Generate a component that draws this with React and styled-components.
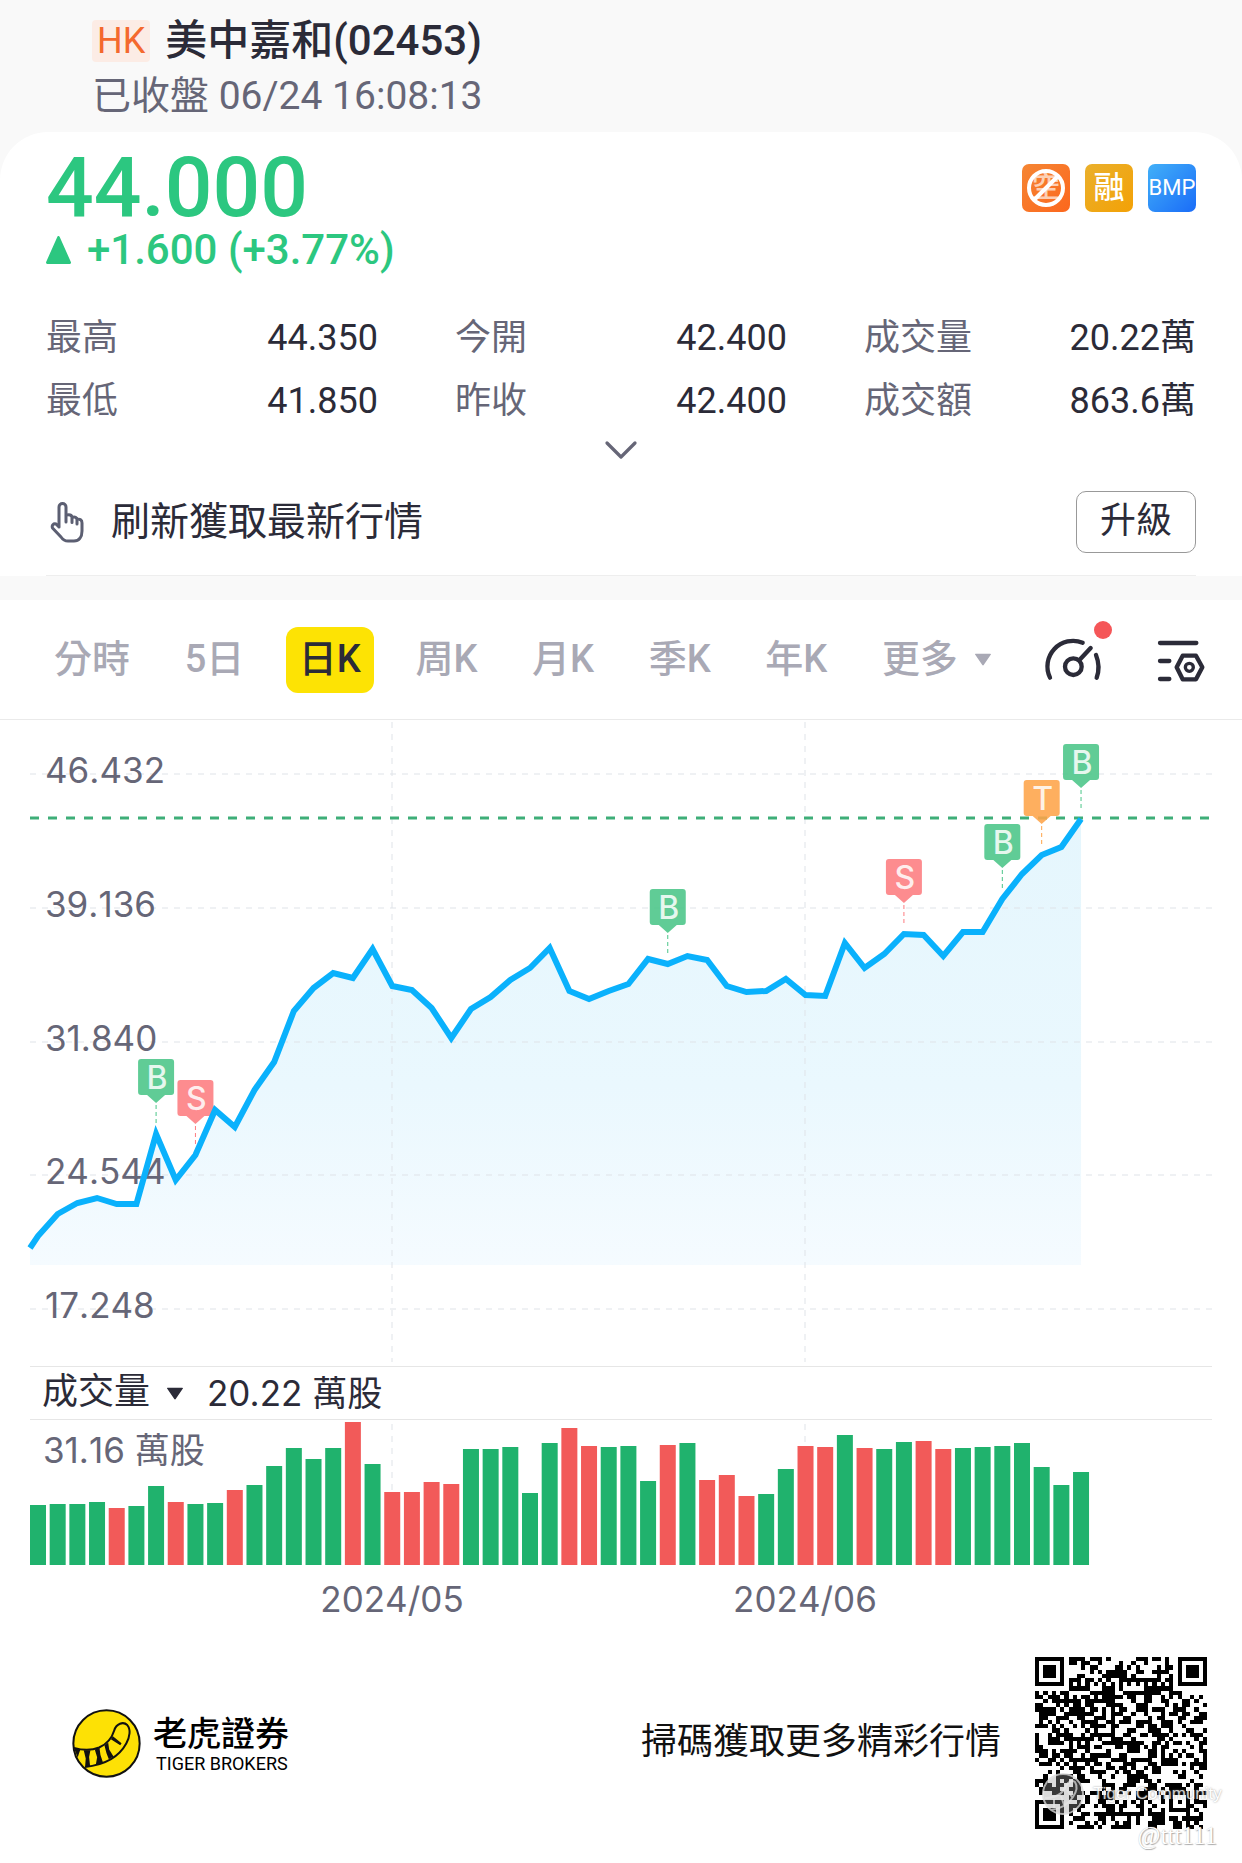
import styled, { createGlobalStyle } from 'styled-components';
import { ChevronDown } from 'lucide-react';

const GlobalStyle = createGlobalStyle`
	* {
		box-sizing: border-box;
	}
	body {
		margin: 0;
		background: #fff;
		color: #2b2b38;
		font-family: Roboto, 'Noto Sans CJK TC', sans-serif;
		line-height: 1.2;
	}
	button {
		font-family: inherit;
		line-height: inherit;
		color: inherit;
		background: none;
		border: 0;
		padding: 0;
		cursor: pointer;
	}
`;

const Page = styled.main`
	background: #f9f9f9;
`;

const Header = styled.header`
	padding: 14px 92px 8px;
`;

const TitleRow = styled.div`
	display: flex;
	align-items: center;
	gap: 15px;
	height: 54px;
`;

const Market = styled.span`
	padding: 0 5px;
	border-radius: 4px;
	background: #fcece5;
	color: #f4692e;
	font-size: 36px;
	line-height: 42px;
`;

const Title = styled.h1`
	margin: 0;
	font-size: 42px;
	font-weight: 500;
	line-height: 52px;
`;

const Status = styled.p`
	margin: 0;
	color: #666677;
	font-size: 39px;
	line-height: 56px;
`;

const Card = styled.section`
	padding: 14px 46px 0;
	border-radius: 48px 48px 0 0;
	background: #fff;
`;

const PriceRow = styled.div`
	display: flex;
	justify-content: space-between;
	color: #2cc780;
`;

const Price = styled.div`
	font-size: 84px;
	font-weight: 500;
	line-height: 84px;
`;

const Change = styled.div`
	display: flex;
	align-items: center;
	gap: 16px;
	font-size: 42px;
	font-weight: 500;
	line-height: 40px;
`;

const Badges = styled.div`
	display: flex;
	gap: 15px;
	padding-top: 18px;
`;

const Badge = styled.span`
	position: relative;
	display: flex;
	align-items: center;
	justify-content: center;
	width: 48px;
	height: 48px;
	border-radius: 7px;
	background: linear-gradient(135deg, ${({ $from }) => $from}, ${({ $to }) => $to});
	color: #fff;
	font-size: ${({ $size }) => $size};
	font-weight: ${({ $weight }) => $weight || 500};
`;

const BanIcon = styled.svg`
	position: absolute;
	inset: 0;
`;

const Faded = styled.span`
	opacity: 0.65;
`;

const Stats = styled.dl`
	display: grid;
	grid-template-columns: repeat(3, 1fr);
	column-gap: 77px;
	margin: 37px 0 0;
	font-size: 36px;
	line-height: 63px;
`;

const Stat = styled.div`
	display: flex;
	justify-content: space-between;
`;

const StatName = styled.dt`
	color: #666677;
`;

const StatValue = styled.dd`
	margin: 0;
`;

const Expand = styled.button`
	display: flex;
	align-items: center;
	justify-content: center;
	width: 100%;
	height: 34px;
	color: #666677;
`;

const Notice = styled.div`
	display: flex;
	align-items: center;
	gap: 25px;
	padding: 24px 0 22px;
	border-bottom: 1px solid #eee;
	font-size: 39px;
`;

const NoticeText = styled.span`
	flex: 1;
`;

const Upgrade = styled.button`
	height: 62px;
	padding: 0 23px;
	border: 1px solid #999;
	border-radius: 10px;
	font-size: 36px;
`;

const ChartPanel = styled.section`
	margin-top: 24px;
	background: #fff;
`;

const Toolbar = styled.div`
	display: flex;
	align-items: center;
	height: 120px;
	padding: 0 36px 0 41px;
	border-bottom: 1px solid #eaeaea;
`;

const Tabs = styled.nav`
	display: flex;
	flex: 1;
	justify-content: space-between;
	margin-right: 40px;
`;

const Tab = styled.button`
	display: flex;
	align-items: center;
	gap: 17px;
	height: 66px;
	padding: 0 13px;
	border-radius: 12px;
	background: ${({ $active }) => ($active ? '#fde304' : 'transparent')};
	color: ${({ $active }) => ($active ? '#2b2b38' : '#a9a9b5')};
	font-size: 38px;
	font-weight: 500;
`;

const Tool = styled.button`
	display: flex;
	& + & {
		margin-left: 42px;
	}
`;

const Plot = styled.svg`
	display: block;
	width: 100%;
	height: auto;
`;

const AxisText = styled.text`
	fill: #666677;
	font-family: Inter, 'Noto Sans CJK TC', sans-serif;
	font-size: 35px;
	font-kerning: none;
`;

const MarkerText = styled.text`
	fill: #fff;
	fill-opacity: 0.85;
	font-family: Inter, sans-serif;
	font-size: 32px;
	font-weight: 500;
	text-anchor: middle;
`;

const VolumeBar = styled.div`
	display: flex;
	align-items: center;
	height: 54px;
	margin: 0 30px;
	padding-left: 12px;
	border-top: 1px solid #e6e6e6;
	border-bottom: 1px solid #e6e6e6;
	font-size: 36px;
`;

const VolumeSelect = styled.button`
	display: flex;
	align-items: center;
	gap: 17px;
	margin-right: 24px;
	font-size: 36px;
`;

const VolumeValue = styled.span`
	font-family: Inter, 'Noto Sans CJK TC', sans-serif;
	font-size: 35px;
`;

const Footer = styled.footer`
	display: flex;
	align-items: center;
	padding: 25px 35px 34px 72px;
	background: #fff;
`;

const Brand = styled.div`
	display: flex;
	flex: 1;
	align-items: center;
	gap: 12px;
	color: #000;
`;

const BrandName = styled.div`
	font-size: 34px;
	font-weight: 500;
	line-height: 42px;
`;

const BrandLatin = styled.div`
	padding-left: 3px;
	font-size: 18px;
	line-height: 18px;
`;

const ScanText = styled.span`
	margin-right: 34px;
	color: #111;
	font-size: 36px;
`;

const QrBox = styled.div`
	position: relative;
	width: 172px;
	height: 172px;
`;

const Watermark = styled.div`
	position: absolute;
	top: 115px;
	left: 6px;
	display: flex;
	align-items: center;
	gap: 8px;
	color: #fff;
	font-family: 'Liberation Sans', sans-serif;
	font-size: 17px;
	white-space: nowrap;
	opacity: 0.8;
	text-shadow: 0 0 2px #777;
`;

const Handle = styled.div`
	position: absolute;
	top: 166px;
	right: -10px;
	color: #fff;
	font-family: 'Liberation Serif', serif;
	font-size: 25px;
	line-height: 26px;
	text-shadow: 1px 1px 1px #aaa, 0 0 1px #bbb;
`;

const stats = [
	['最高', '44.350'],
	['今開', '42.400'],
	['成交量', '20.22萬'],
	['最低', '41.850'],
	['昨收', '42.400'],
	['成交額', '863.6萬'],
];

const tabs = ['分時', '5日', '日K', '周K', '月K', '季K', '年K', '更多'];

const levels = [
	['46.432', 54],
	['39.136', 188],
	['31.840', 322],
	['24.544', 455],
	['17.248', 589],
];

const months = [
	['2024/05', 392],
	['2024/06', 805],
];

// y of each trading day in the price plot
const closes = [
	516, 494, 483, 478, 484, 484, 414, 460, 435, 390, 407, 370, 342, 291, 268, 253, 258, 229,
	266, 270, 288, 318, 289, 277, 260, 248, 228, 271, 279, 271, 264, 239, 244, 236, 240, 266,
	272, 271, 259, 275, 276, 223, 248, 234, 214, 215, 236, 212, 212, 179, 154, 135, 127, 99,
];

// bar heights, negative for a falling day
const volumes = [
	60, 61, 61, 63, -57, 59, 79, -63, 61, 62, -75, 80, 99, 117, 106, 117, -143, 101,
	-73, -73, -83, -81, 116, 116, 118, 72, 122, -137, -119, 118, 119, 84, -120, 122, -85, -90,
	-69, 71, 96, -119, -118, 130, -117, 116, 123, -124, -116, 117, 118, 119, 122, 98, 80, 93,
];

const markers = [
	[6, 'B'],
	[8, 'S'],
	[32, 'B'],
	[44, 'S'],
	[49, 'B'],
	[51, 'T'],
	[53, 'B'],
];

const markerColors = { B: '#4ac588', S: '#fd7c80', T: '#fea449' };

const dayX = (i) => 38 + i * 19.68;

const Triangle = ({ up, size, color }) => (
	<svg width={size} height={up ? size + 3 : size - 3} viewBox='0 0 20 20' preserveAspectRatio='none' aria-hidden='true'>
		<path d={up ? 'M10 1 19 19H1Z' : 'M1 2H19L10 18Z'} fill={color} stroke={color} strokeWidth='2' strokeLinejoin='round' />
	</svg>
);

const HandIcon = () => (
	<svg width='40' height='42' viewBox='-3 0 40 42' fill='none' stroke='#5c5f72' strokeWidth='3' strokeLinecap='round' strokeLinejoin='round'>
		<path d='M10 26V6a3.5 3.5 0 0 1 7 0v15M17 14.5c3-1.5 6-.5 6 2v5M23 16.500c3-1 5 0 5 2.500v4M28 18.500c3-1 5 .5 5 3.500v8c0 6-3 10-8 10h-6c-3 0-5-1-7-4L3.500 27c-1-2.500 1-5 3.500-4l3 3' />
	</svg>
);

const GaugeIcon = () => (
	<svg width='70' height='80' viewBox='75 30 210 240' fill='none' stroke='#2b2b38' strokeWidth='13' strokeLinecap='round'>
		<path d='M93 203A77 77 0 0 1 191 98' />
		<path d='M231 135Q245 170 233 203' />
		<circle cx='163' cy='170' r='25' />
		<path d='M182 149 215 114' />
		<circle cx='252' cy='60' r='27' fill='#f55658' stroke='none' />
	</svg>
);

const SettingsIcon = () => (
	<svg width='50' height='50' viewBox='410 75 150 150' fill='none' stroke='#2b2b38' strokeWidth='13' strokeLinecap='round' strokeLinejoin='round'>
		<path d='M422 99H531M422 153H450M422 207H450' />
		<path d='M472 172 490 137H530L549 172 530 208H490Z' />
		<circle cx='510' cy='172' r='12' strokeWidth='10' />
	</svg>
);

const TigerLogo = () => (
	<svg width='69' height='69' viewBox='37 55 206 206' aria-hidden='true'>
		<circle cx='140' cy='158' r='99' fill='#fde105' stroke='#111' strokeWidth='6' />
		<path
			d='M43 171Q85 183 118 170C145 158 156 142 163 119C169 99 190 91 202 103C213 115 210 138 199 158C176 200 132 222 76 228'
			fill='none'
			stroke='#111'
			strokeWidth='6'
		/>
		<path d='M43 172 62 176 58 187 54 200ZM72 178H92L88 198 91 225 76 228 78 203ZM105 176 119 171 122 192 130 216 108 222 112 199ZM134 164 145 155 148 176 161 197 147 205 140 187ZM153 145 159 136 185 157 181 163Z' fill='#111' />
	</svg>
);

const Marker = ({ day, kind }) => {
	const x = dayX(day);
	const top = closes[day] - 75;
	const color = markerColors[kind];
	return (
		<g>
			<path
				d={`M${x - 15} ${top}h30q3 0 3 3v30q0 3-3 3h-6l-9 8-9-8h-6q-3 0-3-3v-30q0-3 3-3z`}
				fill={color}
				fillOpacity='0.88'
			/>
			<path d={`M${x} ${top + 46}v18`} stroke={color} strokeDasharray='4 3' />
			<MarkerText x={x + 1} y={top + 30}>{kind}</MarkerText>
		</g>
	);
};

const PriceChart = () => {
	const line = closes.map((y, i) => `L${dayX(i)} ${y}`).join('');
	return (
		<Plot viewBox='0 0 1242 646' role='img' aria-label='日K'>
			<defs>
				<linearGradient id='area' x1='0' y1='0' x2='0' y2='1'>
					<stop offset='0' stopColor='#e5f6fd' />
					<stop offset='0.6' stopColor='#eaf8fe' />
					<stop offset='1' stopColor='#f5fbff' />
				</linearGradient>
			</defs>
			<path d={`M30 528${line}V545H30Z`} fill='url(#area)' />
			<g stroke='#dfe3e8' strokeDasharray='6 6'>
				{levels.map(([label, y]) => (
					<path key={label} d={`M30 ${y}H1212`} />
				))}
				{months.map(([label, x]) => (
					<path key={label} d={`M${x} 2V642`} />
				))}
			</g>
			{levels.map(([label, y]) => (
				<AxisText key={label} x='45' y={y + 9}>{label}</AxisText>
			))}
			<path d='M30 98H1212' stroke='#3eae78' strokeWidth='3' strokeDasharray='9 9' />
			{markers.map(([day, kind]) => (
				<Marker key={day} day={day} kind={kind} />
			))}
			<path d={`M30 528${line}`} fill='none' stroke='#0ab1fc' strokeWidth='6' />
		</Plot>
	);
};

const VolumeChart = () => (
	<Plot viewBox='0 0 1242 212' role='img' aria-label='成交量'>
		{months.map(([label, x]) => (
			<path key={label} d={`M${x} 4V140`} stroke='#dfe3e8' strokeDasharray='6 6' />
		))}
		{volumes.map((v, i) => (
			<rect
				key={i}
				x={dayX(i) - 8}
				y={145 - Math.abs(v)}
				width='16'
				height={Math.abs(v)}
				fill={v < 0 ? '#f25a59' : '#20b26d'}
			/>
		))}
		<AxisText x='43' y='43'>31.16 萬股</AxisText>
		{months.map(([label, x]) => (
			<AxisText key={label} x={x} y='192' textAnchor='middle'>{label}</AxisText>
		))}
	</Plot>
);

const QR_SIZE = 41;

const isFinder = (x, y) => {
	const d = Math.max(Math.abs(x - 3), Math.abs(y - 3));
	return d === 3 || d < 2;
};

const qrPath = () => {
	let seed = 2453;
	let d = '';
	for (let y = 0; y < QR_SIZE; y++) {
		for (let x = 0; x < QR_SIZE; x++) {
			seed = (seed * 1103515245 + 12345) % 2147483648;
			const fx = x > 32 ? QR_SIZE - 1 - x : x;
			const fy = y > 32 ? QR_SIZE - 1 - y : y;
			let on = seed / 2147483648 > 0.48;
			if (fx < 8 && fy < 8 && !(x > 32 && y > 32)) {
				on = isFinder(fx, fy);
			} else if (x === 6 || y === 6) {
				on = (x + y) % 2 === 0;
			} else if (Math.abs(x - 34) < 3 && Math.abs(y - 34) < 3) {
				on = Math.max(Math.abs(x - 34), Math.abs(y - 34)) !== 1;
			}
			if (on) d += `M${x} ${y}h1v1h-1z`;
		}
	}
	return d;
};

const QrCode = () => (
	<QrBox>
		<svg width='172' height='172' viewBox={`0 0 ${QR_SIZE} ${QR_SIZE}`} shapeRendering='crispEdges' role='img' aria-label='QR'>
			<path d={qrPath()} fill='#000' />
		</svg>
		<Watermark>
			<svg width='44' height='44' viewBox='0 0 44 44' fill='none' stroke='#ddd' strokeWidth='2'>
				<circle cx='22' cy='22' r='20' fill='#999' fillOpacity='0.45' />
				<path d='M4 26Q20 26 25 14Q29 7 34 10Q38 16 32 25Q25 36 10 38M13 27v9M20 24l3 9M26 18l5 7' />
			</svg>
			Tiger Community
		</Watermark>
		<Handle>@ttt111</Handle>
	</QrBox>
);

const App = () => {
	return (
		<Page>
			<GlobalStyle />
			<Header>
				<TitleRow>
					<Market>HK</Market>
					<Title>美中嘉和(02453)</Title>
				</TitleRow>
				<Status>已收盤 06/24 16:08:13</Status>
			</Header>
			<Card>
				<PriceRow>
					<div>
						<Price>44.000</Price>
						<Change>
							<Triangle up size={25} color='#2cc780' />
							+1.600 (+3.77%)
						</Change>
					</div>
					<Badges>
						<Badge $from='#f58634' $to='#fc671d' $size='28px'>
							<Faded>空</Faded>
							<BanIcon width='48' height='48' viewBox='0 0 48 48' fill='none' stroke='#fff' strokeWidth='4'>
								<circle cx='24' cy='24' r='17' />
								<path d='M12 36 36 12' />
							</BanIcon>
						</Badge>
						<Badge $from='#eab02c' $to='#f3a106' $size='31px'>融</Badge>
						<Badge $from='#42b0f8' $to='#1a6cf8' $size='22px' $weight={400}>BMP</Badge>
					</Badges>
				</PriceRow>
				<Stats>
					{stats.map(([name, value]) => (
						<Stat key={name}>
							<StatName>{name}</StatName>
							<StatValue>{value}</StatValue>
						</Stat>
					))}
				</Stats>
				<Expand aria-label='expand'>
					<ChevronDown size={56} strokeWidth={1.4} />
				</Expand>
				<Notice>
					<HandIcon />
					<NoticeText>刷新獲取最新行情</NoticeText>
					<Upgrade>升級</Upgrade>
				</Notice>
			</Card>
			<ChartPanel>
				<Toolbar>
					<Tabs>
						{tabs.map((name) => (
							<Tab key={name} $active={name === '日K'}>
								{name}
								{name === '更多' && <Triangle size={16} color='#a9a9b5' />}
							</Tab>
						))}
					</Tabs>
					<Tool aria-label='gauge'>
						<GaugeIcon />
					</Tool>
					<Tool aria-label='settings'>
						<SettingsIcon />
					</Tool>
				</Toolbar>
				<PriceChart />
				<VolumeBar>
					<VolumeSelect>
						成交量
						<Triangle size={16} color='#2b2b38' />
					</VolumeSelect>
					<VolumeValue>20.22 萬股</VolumeValue>
				</VolumeBar>
				<VolumeChart />
			</ChartPanel>
			<Footer>
				<Brand>
					<TigerLogo />
					<div>
						<BrandName>老虎證券</BrandName>
						<BrandLatin>TIGER BROKERS</BrandLatin>
					</div>
				</Brand>
				<ScanText>掃碼獲取更多精彩行情</ScanText>
				<QrCode />
			</Footer>
		</Page>
	);
};

export default App;
